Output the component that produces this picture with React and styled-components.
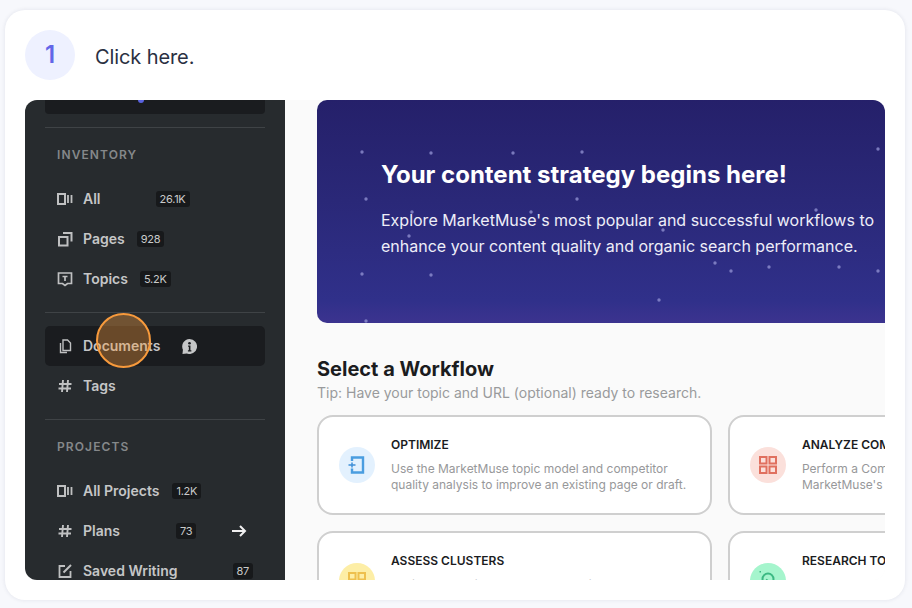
import React from "react";
import styled, { createGlobalStyle } from "styled-components";

const Global = createGlobalStyle`
  html, body { margin: 0; padding: 0; background: #f7f8fc; }
  body { font-family: "Inter", "Liberation Sans", sans-serif; }
  * { box-sizing: border-box; }
`;

const Page = styled.div`
  width: 912px;
  height: 608px;
  padding: 10px 7px 8px 5px;
  overflow: hidden;
`;
const StepCard = styled.div`
  position: relative;
  width: 900px;
  height: 590px;
  padding: 20px;
  background: #fff;
  border-radius: 20px;
  box-shadow: 0 0 4px rgba(30, 40, 80, 0.1);
`;
const StepHeader = styled.div`
  display: flex;
  align-items: center;
  gap: 20px;
  height: 50px;
  margin-bottom: 20px;
`;
const StepNumber = styled.div`
  width: 50px;
  height: 50px;
  border-radius: 50%;
  background: #eef1ff;
  color: #6366e8;
  font: 600 24px/50px "Inter", sans-serif;
  text-align: center;
`;
const StepText = styled.div`
  font: 400 20px/24px "Inter", sans-serif;
  color: #2a3042;
  letter-spacing: -0.1px;
  padding-top: 4px;
`;
const Shot = styled.div`
  display: flex;
  width: 860px;
  height: 480px;
  overflow: hidden;
  border-radius: 12px;
  background: #fafafa;
`;
const Sidebar = styled.div`
  flex: 0 0 260px;
  padding: 0 20px;
  background: #272b2e;
`;
const TopBox = styled.div`
  position: relative;
  height: 14px;
  background: #1a1c1f;
  border-radius: 0 0 4px 4px;
`;
const TopDot = styled.span`
  position: absolute;
  left: 93px;
  top: -3px;
  width: 6px;
  height: 6px;
  border-radius: 50%;
  background: #5a63e0;
`;
const Divider = styled.div`
  height: 1px;
  margin: 13px 0;
  background: #3f4346;
`;
const SectionLabel = styled.div`
  margin: 19px 0 16px 12px;
  font: 600 12px/16px "Inter", sans-serif;
  letter-spacing: 1.1px;
  color: #85888a;
`;
const NavItem = styled.div`
  display: flex;
  align-items: center;
  height: 40px;
  padding-left: 12px;
  border-radius: 5px;
  background: ${(p) => (p.$active ? "#1a1c1f" : "transparent")};
  color: #c5c6c7;
  font: 600 14px/20px "Inter", sans-serif;
`;
const NavIcon = styled.svg`
  flex: 0 0 16px;
  width: 16px;
  height: 16px;
  margin-right: 10px;
  fill: none;
  stroke: #bfc0c1;
  stroke-width: 1.6;
`;
const Badge = styled.span`
  margin-left: ${(p) => p.$gap}px;
  padding: 0 4px;
  height: 16px;
  border-radius: 3px;
  background: #17191b;
  color: #c9caca;
  font: 400 11px/16px "Inter", sans-serif;
  letter-spacing: -0.25px;
`;
const TrailingIcon = styled.svg`
  margin-left: ${(p) => p.$gap}px;
  width: ${(p) => p.$size}px;
  height: ${(p) => p.$size}px;
`;
const Main = styled.div`
  flex: 1;
  min-width: 0;
  padding-left: 32px;
  overflow: hidden;
`;
const Hero = styled.div`
  position: relative;
  width: 568px;
  height: 223px;
  padding: 59px 0 0 64px;
  border-radius: 10px 0 0 10px;
  overflow: hidden;
  background: linear-gradient(180deg, #25206a 0%, #2a2878 45%, #30308a 90%, #3c338f 100%);
  color: #fff;
`;
const Stars = styled.svg`
  position: absolute;
  inset: 0;
  width: 568px;
  height: 223px;
`;
const HeroTitle = styled.div`
  position: relative;
  font: 700 24px/32px "Inter", sans-serif;
  color: #fff;
  white-space: nowrap;
`;
const HeroText = styled.div`
  position: relative;
  margin-top: 16px;
  font: 400 16px/26px "Inter", sans-serif;
  color: #eeeef8;
  white-space: nowrap;
`;
const SectionTitle = styled.div`
  margin-top: 34px;
  font: 700 20px/24px "Inter", sans-serif;
  color: #1b1c1e;
`;
const Tip = styled.div`
  margin: 2px 0 12px;
  font: 400 14px/20px "Inter", sans-serif;
  color: #999a9c;
  white-space: nowrap;
`;
const CardGrid = styled.div`
  display: grid;
  grid-template-columns: 395px 395px;
  grid-auto-rows: 100px;
  gap: 16px;
  width: 806px;
`;
const WorkflowCard = styled.div`
  display: flex;
  align-items: center;
  gap: 16px;
  padding-left: 20px;
  background: #fff;
  border: 2px solid #cfcfcf;
  border-radius: 16px;
`;
const IconCircle = styled.div`
  flex: 0 0 36px;
  display: flex;
  align-items: center;
  justify-content: center;
  width: 36px;
  height: 36px;
  border-radius: 50%;
  background: ${(p) => p.$bg};
`;
const CardBody = styled.div`
  min-width: 0;
`;
const CardTitle = styled.div`
  margin-bottom: 8px;
  font: 600 12px/16px "Inter", sans-serif;
  color: #1b1c1e;
  white-space: nowrap;
`;
const CardText = styled.div`
  font: 400 12px/16px "Inter", sans-serif;
  color: #97989a;
  white-space: pre;
`;
const ClickRing = styled.div`
  position: absolute;
  left: 91px;
  top: 303px;
  width: 55px;
  height: 55px;
  border-radius: 50%;
  border: 2px solid #f79a3c;
  background: rgba(247, 154, 60, 0.36);
`;

const icons = {
  board: (
    <>
      <rect x="1" y="3" width="7" height="10" strokeWidth="2" />
      <path d="M11 4v8M14.500 4v8" strokeWidth="1.800" />
    </>
  ),
  pages: (
    <>
      <rect x="2" y="6" width="8.500" height="8.500" strokeWidth="2" />
      <path d="M6 2h8.500v8.500" strokeWidth="2" />
    </>
  ),
  topic: (
    <>
      <path d="M1.500 2h13v10.500h-4L8 14.500l-2.500-2H1.500z" strokeWidth="1.700" />
      <path d="M5.500 5.500h5M8 5.500v4.500" strokeWidth="1.700" />
    </>
  ),
  docs: (
    <>
      <path d="M6 2h4.500L13.500 5v7.500H6z" strokeWidth="1.400" />
      <path d="M3.500 5v9.500H10" strokeWidth="1.400" />
    </>
  ),
  hash: <path d="M6 2 5 14M11 2l-1 12M2 6h12.500M1.500 10.500H14" strokeWidth="1.900" />,
  edit: (
    <>
      <path d="M8 3H2.500v11h11V8" strokeWidth="1.800" />
      <path d="M6.500 9.500 14 2" strokeWidth="2" />
    </>
  ),
};

const Nav = ({ icon, label, active, badge, gap, children }) => (
  <NavItem $active={active}>
    <NavIcon viewBox="0 0 16 16">{icons[icon]}</NavIcon>
    {label}
    {badge && <Badge $gap={gap}>{badge}</Badge>}
    {children}
  </NavItem>
);

const stars = [
  [45, 52], [114, 53], [196, 53], [265, 52], [49, 99], [260, 99], [95, 112], [214, 112],
  [92, 136], [45, 174], [114, 175], [49, 221], [561, 49], [499, 110], [346, 130], [398, 163],
  [414, 171], [452, 167], [522, 167], [561, 171], [342, 200],
];

const GridIcon = ({ color, size }) => (
  <svg width={size} height={size} viewBox="0 0 18 18" fill="none" stroke={color} strokeWidth="2">
    <rect x="1" y="1" width="6.500" height="6.500" />
    <rect x="10.500" y="1" width="6.500" height="6.500" />
    <rect x="1" y="10.500" width="6.500" height="6.500" />
    <rect x="10.500" y="10.500" width="6.500" height="6.500" />
  </svg>
);

export default function App() {
  return (
    <Page>
      <Global />
      <StepCard>
        <StepHeader>
          <StepNumber>1</StepNumber>
          <StepText>Click here.</StepText>
        </StepHeader>
        <Shot>
          <Sidebar>
            <TopBox>
              <TopDot />
            </TopBox>
            <Divider />
            <SectionLabel>INVENTORY</SectionLabel>
            <Nav icon="board" label="All" badge="26.1K" gap={55} />
            <Nav icon="pages" label="Pages" badge="928" gap={12} />
            <Nav icon="topic" label="Topics" badge="5.2K" gap={12} />
            <Divider />
            <Nav icon="docs" label="Documents" active>
              <TrailingIcon $gap={22} $size={15} viewBox="0 0 16 16">
                <path d="M8 0a8 8 0 1 1-3 15.400L.500 16 1 11.500A8 8 0 0 1 8 0z" fill="#c5c6c7" />
                <circle cx="8" cy="4.500" r="1.400" fill="#1a1c1f" />
                <path d="M6.500 7h2.500v5h1v1.200H6.300V12h1V8.200h-.8z" fill="#1a1c1f" />
              </TrailingIcon>
            </Nav>
            <Nav icon="hash" label="Tags" />
            <Divider />
            <SectionLabel>PROJECTS</SectionLabel>
            <Nav icon="board" label="All Projects" badge="1.2K" gap={13} />
            <Nav icon="hash" label="Plans" badge="73" gap={56}>
              <TrailingIcon $gap={35} $size={16} viewBox="0 0 16 16">
                <path d="M1 8h13M9 3l5 5-5 5" fill="none" stroke="#f0f0f0" strokeWidth="2" />
              </TrailingIcon>
            </Nav>
            <Nav icon="edit" label="Saved Writing" badge="87" gap={55} />
          </Sidebar>
          <Main>
            <Hero>
              <Stars viewBox="0 0 568 223">
                {stars.map(([x, y]) => (
                  <circle key={`${x}-${y}`} cx={x} cy={y} r="1.700" fill="#8f8fd0" opacity="0.8" />
                ))}
              </Stars>
              <HeroTitle>Your content strategy begins here!</HeroTitle>
              <HeroText>
                Explore MarketMuse's most popular and successful workflows to
                <br />
                enhance your content quality and organic search performance.
              </HeroText>
            </Hero>
            <SectionTitle>Select a Workflow</SectionTitle>
            <Tip>Tip: Have your topic and URL (optional) ready to research.</Tip>
            <CardGrid>
              <WorkflowCard>
                <IconCircle $bg="#e3f1fe">
                  <svg width="18" height="18" viewBox="0 0 18 18" fill="none" stroke="#4a9de0" strokeWidth="2.400">
                    <path d="M4 5V1.500h11v15H4v-4" />
                    <path d="M.5 9h7M4 6.500v5" stroke="#3f8fd8" strokeWidth="1.500" />
                  </svg>
                </IconCircle>
                <CardBody>
                  <CardTitle>OPTIMIZE</CardTitle>
                  <CardText>
                    {"Use the MarketMuse topic model and competitor\nquality analysis to improve an existing page or draft."}
                  </CardText>
                </CardBody>
              </WorkflowCard>
              <WorkflowCard>
                <IconCircle $bg="#fbe0db">
                  <GridIcon color="#e0705f" size={18} />
                </IconCircle>
                <CardBody>
                  <CardTitle>ANALYZE COMPETITORS</CardTitle>
                  <CardText>
                    {"Perform a Competitive analysis using\nMarketMuse's content quality metrics."}
                  </CardText>
                </CardBody>
              </WorkflowCard>
              <WorkflowCard>
                <IconCircle $bg="#fdeea6">
                  <GridIcon color="#eec04e" size={18} />
                </IconCircle>
                <CardBody>
                  <CardTitle>ASSESS CLUSTERS</CardTitle>
                  <CardText>{"Review the topic clusters on your site\nand find the gaps."}</CardText>
                </CardBody>
              </WorkflowCard>
              <WorkflowCard>
                <IconCircle $bg="#a5f5cd">
                  <svg width="20" height="20" viewBox="0 0 20 20" fill="none" stroke="#3cb983" strokeWidth="2">
                    <circle cx="10" cy="8" r="5.500" />
                    <path d="M8 8.500l2 1.500" />
                    <path d="M1.500 0.500h1.500" />
                  </svg>
                </IconCircle>
                <CardBody>
                  <CardTitle>RESEARCH TOPICS</CardTitle>
                  <CardText>{"Research a topic to plan\nyour next piece of content."}</CardText>
                </CardBody>
              </WorkflowCard>
            </CardGrid>
          </Main>
        </Shot>
        <ClickRing />
      </StepCard>
    </Page>
  );
}
